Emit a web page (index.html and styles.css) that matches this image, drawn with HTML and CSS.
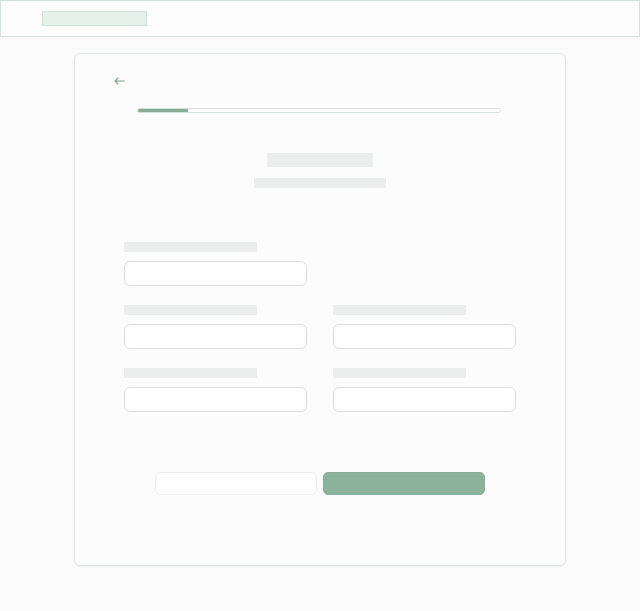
FILE: index.html
```html
<!DOCTYPE html>
<html lang="en">
<head>
<meta charset="utf-8">
<title>Onboarding</title>
<link rel="stylesheet" href="styles.css">
</head>
<body>
<header class="topbar">
  <div class="logo"></div>
</header>
<main class="page">
  <section class="card">
    <button class="back" aria-label="Back">
      <svg width="11" height="8" viewBox="0 0 11 8"><path d="M10.5 4H1.2M4 1L1 4l3 3" fill="none" stroke="#7fa08f" stroke-width="1.1" stroke-linecap="round" stroke-linejoin="round"/></svg>
    </button>
    <div class="progress"><div class="progress-fill"></div></div>
    <div class="title ph"></div>
    <div class="subtitle ph"></div>
    <div class="form">
      <div class="field">
        <div class="label ph"></div>
        <div class="input"></div>
      </div>
      <div class="field empty"></div>
      <div class="field">
        <div class="label ph"></div>
        <div class="input"></div>
      </div>
      <div class="field">
        <div class="label ph"></div>
        <div class="input"></div>
      </div>
      <div class="field">
        <div class="label ph"></div>
        <div class="input"></div>
      </div>
      <div class="field">
        <div class="label ph"></div>
        <div class="input"></div>
      </div>
    </div>
    <div class="actions">
      <button class="btn btn-secondary"></button>
      <button class="btn btn-primary"></button>
    </div>
  </section>
</main>
</body>
</html>
```
FILE: styles.css
```css
* { box-sizing: border-box; }
html, body { margin: 0; padding: 0; }
body {
  background: #fafafa;
  font-family: "Liberation Sans", Arial, sans-serif;
  width: 640px;
  min-height: 611px;
}
.topbar {
  height: 37px;
  border: 1px solid #d5dfd9;
  background: #fdfdfd;
  padding: 10px 0 0 41px;
}
.logo {
  width: 105px;
  height: 15px;
  background: #e7f1ec;
  border: 1px solid #cfe0d6;
}
.page {
  padding: 16px 0 0 74px;
}
.card {
  width: 492px;
  height: 513px;
  background: #fcfcfc;
  border: 1px solid #dde4e0;
  border-radius: 6px;
  box-shadow: 0 1px 2px rgba(0,0,0,0.03);
  display: flex;
  flex-direction: column;
  align-items: center;
}
.back {
  align-self: flex-start;
  margin: 23px 0 0 39px;
  padding: 0;
  border: 0;
  background: none;
  width: 11px;
  height: 8px;
  display: block;
  line-height: 0;
}
.progress {
  margin-top: 23px;
  width: 364px;
  height: 5px;
  border: 1px solid #d4e1da;
  border-radius: 3px;
  background: #fefefe;
  overflow: hidden;
  position: relative;
  left: -1px;
}
.progress-fill {
  width: 50px;
  height: 100%;
  background: #86ad98;
}
.ph { background: #ebeeed; }
.title {
  margin-top: 40px;
  width: 106px;
  height: 14px;
}
.subtitle {
  margin-top: 11px;
  width: 132px;
  height: 10px;
}
.form {
  margin-top: 54px;
  width: 392px;
  display: grid;
  grid-template-columns: 183px 183px;
  column-gap: 26px;
  row-gap: 19px;
}
.field { height: 44px; }
.label {
  width: 133px;
  height: 10px;
  margin-bottom: 9px;
}
.input {
  width: 183px;
  height: 25px;
  border: 1px solid #d9dedb;
  border-radius: 6px;
  background: #fefefe;
}
.actions {
  margin-top: 60px;
  display: flex;
  gap: 6px;
}
.btn {
  width: 162px;
  height: 23px;
  border-radius: 5px;
  padding: 0;
  display: block;
}
.btn-secondary {
  background: #fefefe;
  border: 1px solid #ececec;
}
.btn-primary {
  background: #8bb39c;
  border: 1px solid #88b099;
}
```
